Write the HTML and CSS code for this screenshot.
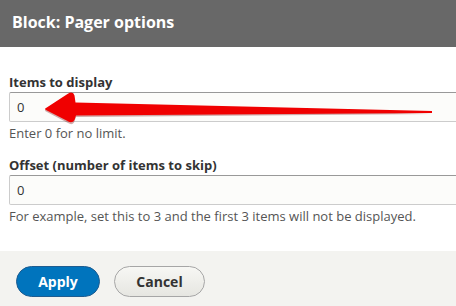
FILE: index.html
```html
<!DOCTYPE html>
<html lang="en">
<head>
  <meta charset="UTF-8" />
  <meta name="viewport" content="width=device-width, initial-scale=1.0"/>
  <title>Block: Pager options</title>
  <link rel="stylesheet" href="styles.css">
</head>
<body>

  <div class="dialog">
    <div class="titlebar">
      <h1>Block: Pager options</h1>
    </div>

    <form class="content">
      <div class="field">
        <label for="items">Items to display</label>
        <input id="items" type="text" value="0" />
        <div class="desc">Enter 0 for no limit.</div>
      </div>
      <div class="field">
        <label for="offset">Offset (number of items to skip)</label>
        <input id="offset" type="text" value="0" />
        <div class="desc">For example, set this to 3 and the first 3 items will not be displayed.</div>
      </div>
    </form>

    <div class="buttons">
      <button class="btn primary" type="button">Apply</button>
      <button class="btn" type="button">Cancel</button>
    </div>

    <!-- annotation arrow pointing at the first field -->
    <svg class="arrow" width="456" height="306" viewBox="0 0 456 306">
      <path d="M432 112.5 L76 115.5 L74 121 Q72 124 68 121.5 L46 110 Q44 109 46 108 L68 94 Q73 91 74 95.5 L75 103 Z" fill="#7a1010" opacity="0.35" transform="translate(0 1.5)"/>
      <path d="M432 111 L432 113 L76 115.5 L74.5 120 Q72 124 67.5 121 L46 110 Q44 109 46 108 L67.5 94 Q73 90.5 74.5 95.5 L75.5 102.5 Z" fill="#f00000"/>
    </svg>
  </div>

</body>
</html>
```

FILE: styles.css
```css
body {
  margin: 0;
  font-family: 'Open Sans', sans-serif;
  color: #333;
  background: #fff;
}

.dialog {
  position: relative;
  width: 456px;
  height: 306px;
  overflow: hidden;
  display: flex;
  flex-direction: column;
}

.titlebar {
  height: 47px;
  background: #686868;
  display: flex;
  align-items: center;
  padding: 0 12px 3px;
  box-sizing: border-box;
}

.titlebar h1 {
  margin: 0;
  color: #fff;
  font-size: 16px;
  font-weight: 700;
}

.content {
  flex: 1;
  padding: 26px 9px 0;
}

.field {
  margin-bottom: 14px;
}

.field label {
  display: block;
  font-size: 13px;
  font-weight: 700;
  line-height: 18px;
  margin-bottom: 1px;
}

.field input {
  display: block;
  width: 600px;
  height: 30px;
  box-sizing: border-box;
  padding: 0 7px;
  font-family: inherit;
  font-size: 13px;
  color: #333;
  background: #fcfcfa;
  border: 1px solid #ccc;
  border-top-color: #999;
  border-radius: 2px;
}

.desc {
  font-size: 13px;
  line-height: 17px;
  margin-top: 3px;
  color: #555;
}

.buttons {
  height: 55px;
  background: #f3f3f0;
  display: flex;
  align-items: flex-start;
  gap: 14px;
  padding: 15px 16px 0;
  box-sizing: border-box;
}

.btn {
  height: 31px;
  border-radius: 16px;
  font-family: inherit;
  font-size: 14px;
  font-weight: 700;
  color: #333;
  width: 91px;
  background: linear-gradient(#f7f7f4, #e6e6e1);
  border: 1px solid #a6a6a6;
}

.btn.primary {
  width: 84px;
  color: #fff;
  background: #0074bd;
  border-color: #1e5c90;
}

.arrow {
  position: absolute;
  left: 0;
  top: 0;
  pointer-events: none;
}
```
